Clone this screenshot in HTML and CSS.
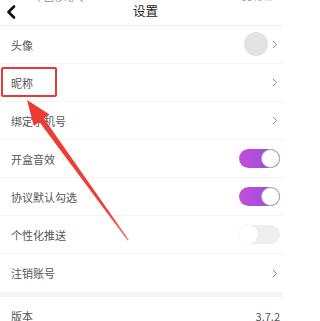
FILE: index.html
```html
<!DOCTYPE html>
<html lang="zh">
<head>
<meta charset="utf-8">
<link rel="stylesheet" href="styles.css">
</head>
<body>
<div class="page">
  <div class="status"><span class="st-left">中国移动 令</span><span class="st-right">95% ▭</span></div>
  <div class="nav">
    <svg class="back" width="10" height="14" viewBox="0 0 10 14"><path d="M8 1.5 L2.5 7 L8 12.5" fill="none" stroke="#111" stroke-width="2.6" stroke-linecap="round" stroke-linejoin="round"/></svg>
    <div class="title">设置</div>
  </div>
  <div class="list">
    <div class="row"><span class="label">头像</span><span class="right"><span class="avatar"></span><svg class="chev" width="6" height="9" viewBox="0 0 6 9"><path d="M1 1 L4.5 4.5 L1 8" fill="none" stroke="#8a8a8a" stroke-width="1"/></svg></span></div>
    <div class="row"><span class="label">昵称</span><span class="right"><svg class="chev" width="6" height="9" viewBox="0 0 6 9"><path d="M1 1 L4.5 4.5 L1 8" fill="none" stroke="#8a8a8a" stroke-width="1"/></svg></span></div>
    <div class="row"><span class="label">绑定手机号</span><span class="right"><svg class="chev" width="6" height="9" viewBox="0 0 6 9"><path d="M1 1 L4.5 4.5 L1 8" fill="none" stroke="#8a8a8a" stroke-width="1"/></svg></span></div>
    <div class="row"><span class="label">开盒音效</span><span class="right"><span class="toggle on"><span class="knob"></span></span></span></div>
    <div class="row"><span class="label">协议默认勾选</span><span class="right"><span class="toggle on"><span class="knob"></span></span></span></div>
    <div class="row"><span class="label">个性化推送</span><span class="right"><span class="toggle off"><span class="knob"></span></span></span></div>
    <div class="row last"><span class="label">注销账号</span><span class="right"><svg class="chev" width="6" height="9" viewBox="0 0 6 9"><path d="M1 1 L4.5 4.5 L1 8" fill="none" stroke="#8a8a8a" stroke-width="1"/></svg></span></div>
  </div>
  <div class="gap"></div>
  <div class="list">
    <div class="row last"><span class="label">版本</span><span class="right version">3.7.2</span></div>
  </div>
  <div class="highlight"></div>
  <svg class="arrow" width="283" height="321" viewBox="0 0 283 321">
    <defs>
      <linearGradient id="ag" x1="27" y1="100" x2="128" y2="240" gradientUnits="userSpaceOnUse">
        <stop offset="0" stop-color="#ec3b33"/>
        <stop offset="0.8" stop-color="#ef3f38"/>
        <stop offset="1" stop-color="#f07a74"/>
      </linearGradient>
    </defs>
    <polygon points="27,100 49.5,114.5 44,118.6 128.6,239.6 127.6,240.4 39.4,121.9 33.8,126" fill="url(#ag)"/>
  </svg>
</div>
</body>
</html>
```
FILE: styles.css
```css
* { box-sizing: border-box; }
html, body { margin: 0; padding: 0; background: #fff; }
body {
  font-family: "Noto Sans CJK SC", "Noto Sans", sans-serif;
  width: 283px;
  height: 321px;
  overflow: hidden;
}
.page { position: relative; width: 283px; height: 321px; overflow: hidden; }
.status {
  height: 3px;
  overflow: hidden;
  display: flex;
  justify-content: space-between;
  padding: 0 10px 0 34px;
  font-size: 10px;
  color: #999;
  line-height: 10px;
}
.status span { margin-top: -8px; }
.nav {
  height: 23px;
  border-bottom: 1px solid #eeeeee;
  display: flex;
  align-items: center;
  position: relative;
  padding-left: 6px;
}
.back { display: block; margin-top: -4px; }
.title {
  position: absolute;
  left: 0; right: 0; top: -3px;
  text-align: center;
  font-size: 12.5px;
  color: #222;
  line-height: 22px;
  padding-left: 8px;
}
.list { display: flex; flex-direction: column; }
.row {
  height: 38px;
  display: flex;
  align-items: center;
  justify-content: space-between;
  padding: 0 3px 0 11px;
  border-bottom: 1px solid #f4f4f4;
}
.row.last { border-bottom: none; }
.label { font-size: 11px; color: #555; line-height: 14px; }
.right { display: flex; align-items: center; gap: 4px; }
.chev { display: block; margin-right: 2px; }
.avatar {
  width: 24px; height: 24px;
  border-radius: 50%;
  background: #e3e3e3;
  margin-top: -2px;
}
.version { font-size: 11px; color: #555; }
.toggle {
  width: 41px; height: 19px;
  border-radius: 10px;
  position: relative;
  display: block;
}
.toggle.on { background: linear-gradient(90deg, #c24fdd 0%, #a34ed8 60%, #9b50d6 100%); }
.toggle.off { background: #efefef; }
.knob {
  position: absolute;
  top: 0;
  width: 19px; height: 19px;
  border-radius: 50%;
  background: #fff;
}
.toggle.on .knob { right: 0; border: 1px solid #b9a8c8; }
.toggle.off .knob { left: 0; box-shadow: 0 0 1px rgba(0,0,0,0.08); }
.gap { height: 5px; background: #f5f5f5; }
.highlight {
  position: absolute;
  left: 1px; top: 67px;
  width: 56px; height: 30px;
  border: 2px solid #e53a36;
  border-radius: 2px;
}
.arrow { position: absolute; left: 0; top: 0; pointer-events: none; }
```
